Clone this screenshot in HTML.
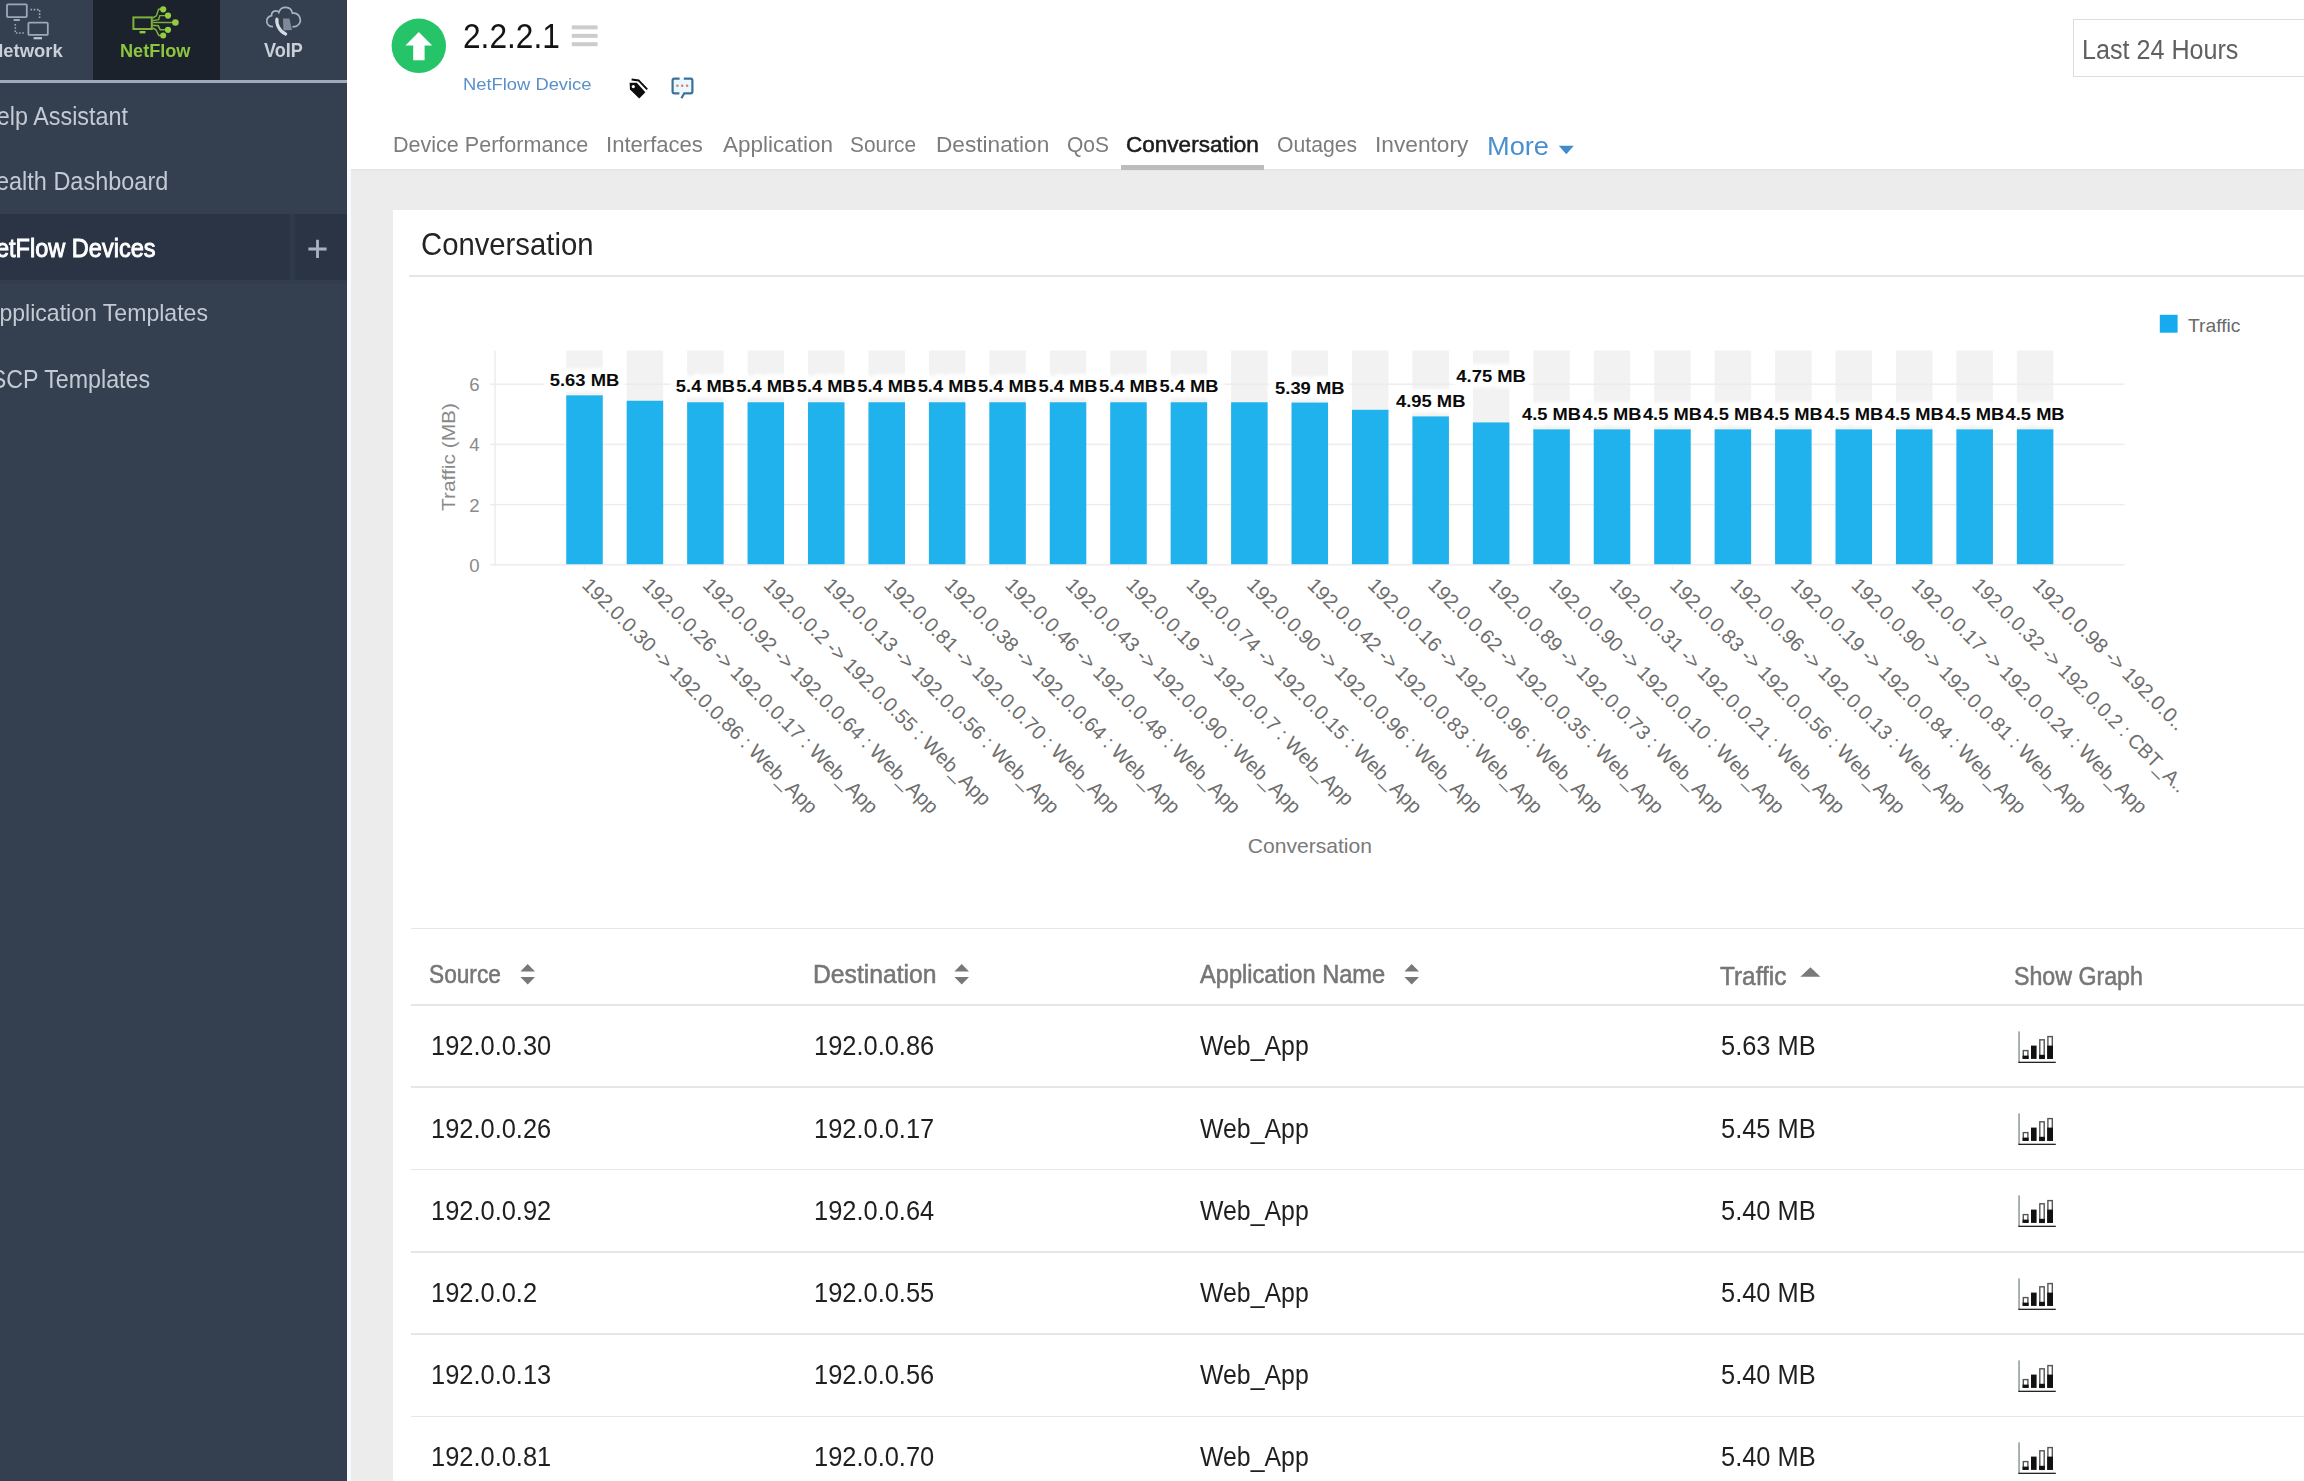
<!DOCTYPE html>
<html>
<head>
<meta charset="utf-8">
<title>NetFlow Device - Conversation</title>
<style>
html,body{margin:0;padding:0;}
body{width:2304px;height:1481px;overflow:hidden;position:relative;background:#ececec;font-family:"Liberation Sans",sans-serif;}
.abs{position:absolute;}
.t{position:absolute;white-space:nowrap;line-height:1;transform-origin:0 0;font-family:"Liberation Sans",sans-serif;}
.hl{position:absolute;height:1.6px;right:0;background:#e6e6e6;}
.chart{position:absolute;left:0;top:0;}
.dl{font-size:16.6px;font-weight:700;fill:#0a0a0a;}
.dg{font-size:16.6px;font-weight:700;fill:#fff;stroke:#fff;stroke-width:12px;stroke-linejoin:round;}
#side{position:absolute;left:0;top:0;width:347px;height:1481px;background:#343f50;}
#head{position:absolute;left:347px;top:0;right:0;height:169.4px;background:#fff;box-shadow:0 1px 2px rgba(0,0,0,.05);}
#strip{position:absolute;left:347px;top:169px;width:3.9px;bottom:0;background:#f8fbff;}
#panel{position:absolute;left:393px;top:210.2px;right:0;bottom:0;background:#fff;}
#nftab{position:absolute;left:92.5px;top:0;width:127.5px;height:80px;background:#1b222c;}
#sline{position:absolute;left:0;top:80.4px;width:347px;height:2.6px;background:#9fabbc;}
#act{position:absolute;left:0;top:213.5px;width:347px;height:66.5px;background:#2a3445;}
#actsep{position:absolute;left:290px;top:213.5px;width:4.5px;height:66.5px;background:#2e394a;}
#actb{position:absolute;left:0;top:280px;width:347px;height:4px;background:#313c4d;}
#tabul{position:absolute;left:1121.2px;top:164.8px;width:142.6px;height:5.6px;background:#bcbcbc;}
#range{position:absolute;left:2073.3px;top:18.9px;width:300px;height:55.9px;border:1.8px solid #dddddd;background:#fff;}
</style>
</head>
<body>
<div id="side"></div>
<div id="head"></div>
<div id="strip"></div>
<div id="panel"></div>
<div id="nftab"></div>
<div id="sline"></div>
<div id="act"></div><div id="actsep"></div><div id="actb"></div>
<div id="tabul"></div>
<div id="range"></div>

<!-- sidebar: plus -->
<svg class="abs" style="left:307px;top:238px" width="22" height="22" viewBox="0 0 22 22"><path d="M1.4 11 H19.6 M10.5 1.8 V20" stroke="#a9b3c0" stroke-width="2.8" fill="none"/></svg>

<!-- top nav icon: Network -->
<svg class="abs" style="left:0;top:0" width="92" height="42" viewBox="0 0 92 42" fill="none" stroke="#9ca8b8">
  <rect x="7" y="4.3" width="19.8" height="12.8" rx="1" stroke-width="1.8"/>
  <path d="M13.6 20 H19.8" stroke-width="2"/>
  <rect x="28.4" y="22.7" width="19.4" height="12.2" rx="1" stroke-width="1.8"/>
  <path d="M33.6 38.2 H42" stroke-width="2.2" stroke="#b9c4cf"/>
  <path d="M30.5 9.6 H39.6 V18.4" stroke-width="1.6" stroke-dasharray="1.6 1.6"/>
  <path d="M15.3 24 V33 H24" stroke-width="1.6" stroke-dasharray="1.6 1.6"/>
</svg>

<!-- top nav icon: NetFlow -->
<svg class="abs" style="left:120px;top:0" width="70" height="42" viewBox="120 0 70 42" fill="none" stroke="#7db13a" stroke-width="1.45">
  <rect x="133.4" y="17.4" width="18.4" height="11.6" stroke-width="2"/>
  <path d="M139.6 32.2 H145.4" stroke-width="2.4" stroke="#8fc93f"/>
  <path d="M152.5 18 L156.4 15.8 L158.6 9.3 H162"/>
  <path d="M152.5 20.6 L158.6 19.6 L159.8 15.6 H166"/>
  <path d="M152.5 22.5 H174"/>
  <path d="M152.5 25.2 L158.2 25.8 L160.2 29.7 H166"/>
  <path d="M152.5 28 L155.8 29.6 L158.8 35.4 H162"/>
  <g fill="#94cc3f" stroke="none">
    <circle cx="163.2" cy="9.3" r="3.1"/><circle cx="168" cy="15.6" r="3.1"/><circle cx="175.4" cy="22.5" r="3.3"/>
    <circle cx="168" cy="29.8" r="3.1"/><circle cx="163.2" cy="35.6" r="3.0"/>
  </g>
</svg>

<!-- top nav icon: VoIP -->
<svg class="abs" style="left:260px;top:0" width="50" height="42" viewBox="260 0 50 42" fill="none">
  <path d="M273 26.6 C265.6 26.6 264.4 17.6 271.6 15.6 C271.2 10.6 277.2 9.6 278.8 12.4 C281 5.6 291 5.6 292.4 13.2 C300.6 12.6 303.4 23 296 26.4 L292.5 26.8" stroke="#a7b2c2" stroke-width="1.7"/>
  <path d="M277 19.2 C276 24 279.6 31.6 285.6 34" stroke="#d5dbe4" stroke-width="3.2" stroke-linecap="round"/>
  <path d="M283 18.4 L289.4 18.4 L292 30 L283.4 30.6 Z" fill="#9aa3b1" opacity=".75"/>
</svg>

<!-- status circle -->
<svg class="abs" style="left:390px;top:17px" width="58" height="58" viewBox="0 0 58 58">
  <circle cx="28.8" cy="28.8" r="27.2" fill="#26c468"/>
  <path d="M28.8 15 L42.2 28.5 L34.6 28.5 L34.6 43.2 L23.2 43.2 L23.2 28.5 L15.4 28.5 Z" fill="#fff"/>
</svg>

<!-- hamburger -->
<svg class="abs" style="left:571px;top:24px" width="28" height="24" viewBox="0 0 28 24">
  <rect x="0.8" y="1.35" width="25.8" height="4" fill="#cccccc"/><rect x="0.8" y="9.85" width="25.8" height="4" fill="#cccccc"/><rect x="0.8" y="18.2" width="25.8" height="4" fill="#cccccc"/>
</svg>

<!-- tag icon -->
<svg class="abs" style="left:626px;top:76px" width="26" height="26" viewBox="626 76 26 26">
  <path d="M629.6 82.8 L636.8 82.8 L645.4 92.2 L639.2 98.6 L630 89.4 Z" fill="#0c0c0c"/>
  <circle cx="633.3" cy="86.6" r="1.6" fill="#fff"/>
  <path d="M631.6 79.6 L638.6 80.4 L647.2 89.4" stroke="#0c0c0c" stroke-width="2" fill="none"/>
</svg>

<!-- comment icon -->
<svg class="abs" style="left:668px;top:74px" width="30" height="28" viewBox="668 74 30 28" fill="none">
  <rect x="672.6" y="78.6" width="19.8" height="14" fill="#e9f8fc"/>
  <path d="M679.6 78.6 H674.4 Q672.6 78.6 672.6 80.4 V91.6 Q672.6 93.4 674.4 93.4 H679.4 M683.8 78.6 H690.6 Q692.4 78.6 692.4 80.4 V91.6 Q692.4 93.4 690.6 93.4 H684.2 L681.4 98.2" stroke="#3d7199" stroke-width="2.2"/>
  <circle cx="677.4" cy="85.8" r="1.25" fill="#e2777a"/><circle cx="682.2" cy="85.8" r="1.25" fill="#e2777a"/><circle cx="687.1" cy="85.8" r="1.25" fill="#e2777a"/>
</svg>

<!-- More caret -->
<svg class="abs" style="left:1558px;top:145px" width="17" height="10" viewBox="0 0 17 10"><path d="M0.8 0.8 L15.8 0.8 L8.3 9.2 Z" fill="#428bca"/></svg>

<div class="hl" style="top:275.2px;left:409px"></div>
<div class="hl" style="top:927.7px;left:410.5px"></div>
<div class="hl" style="top:1004.10px;left:410.5px"></div>
<div class="hl" style="top:1086.40px;left:410.5px"></div>
<div class="hl" style="top:1168.70px;left:410.5px"></div>
<div class="hl" style="top:1251.00px;left:410.5px"></div>
<div class="hl" style="top:1333.30px;left:410.5px"></div>
<div class="hl" style="top:1415.60px;left:410.5px"></div>
<svg class="chart" width="2304" height="1481" viewBox="0 0 2304 1481" font-family="Liberation Sans, sans-serif">
<rect x="566.25" y="350.5" width="36.5" height="214.30" fill="#f2f2f2"/>
<rect x="626.69" y="350.5" width="36.5" height="214.30" fill="#f2f2f2"/>
<rect x="687.13" y="350.5" width="36.5" height="214.30" fill="#f2f2f2"/>
<rect x="747.58" y="350.5" width="36.5" height="214.30" fill="#f2f2f2"/>
<rect x="808.02" y="350.5" width="36.5" height="214.30" fill="#f2f2f2"/>
<rect x="868.46" y="350.5" width="36.5" height="214.30" fill="#f2f2f2"/>
<rect x="928.90" y="350.5" width="36.5" height="214.30" fill="#f2f2f2"/>
<rect x="989.34" y="350.5" width="36.5" height="214.30" fill="#f2f2f2"/>
<rect x="1049.78" y="350.5" width="36.5" height="214.30" fill="#f2f2f2"/>
<rect x="1110.22" y="350.5" width="36.5" height="214.30" fill="#f2f2f2"/>
<rect x="1170.67" y="350.5" width="36.5" height="214.30" fill="#f2f2f2"/>
<rect x="1231.11" y="350.5" width="36.5" height="214.30" fill="#f2f2f2"/>
<rect x="1291.55" y="350.5" width="36.5" height="214.30" fill="#f2f2f2"/>
<rect x="1351.99" y="350.5" width="36.5" height="214.30" fill="#f2f2f2"/>
<rect x="1412.43" y="350.5" width="36.5" height="214.30" fill="#f2f2f2"/>
<rect x="1472.88" y="350.5" width="36.5" height="214.30" fill="#f2f2f2"/>
<rect x="1533.32" y="350.5" width="36.5" height="214.30" fill="#f2f2f2"/>
<rect x="1593.76" y="350.5" width="36.5" height="214.30" fill="#f2f2f2"/>
<rect x="1654.20" y="350.5" width="36.5" height="214.30" fill="#f2f2f2"/>
<rect x="1714.64" y="350.5" width="36.5" height="214.30" fill="#f2f2f2"/>
<rect x="1775.08" y="350.5" width="36.5" height="214.30" fill="#f2f2f2"/>
<rect x="1835.52" y="350.5" width="36.5" height="214.30" fill="#f2f2f2"/>
<rect x="1895.97" y="350.5" width="36.5" height="214.30" fill="#f2f2f2"/>
<rect x="1956.41" y="350.5" width="36.5" height="214.30" fill="#f2f2f2"/>
<rect x="2016.85" y="350.5" width="36.5" height="214.30" fill="#f2f2f2"/>
<rect x="490" y="564.10" width="1634.5" height="1.4" fill="#ececec"/>
<rect x="490" y="503.90" width="1634.5" height="1.4" fill="#ececec"/>
<rect x="490" y="443.70" width="1634.5" height="1.4" fill="#ececec"/>
<rect x="490" y="383.50" width="1634.5" height="1.4" fill="#ececec"/>
<rect x="494.4" y="350.5" width="1.3" height="215.00" fill="#eaeaea"/>
<rect x="566.25" y="395.34" width="36.5" height="168.86" fill="#20b2ec"/>
<rect x="584.00" y="565.60" width="1" height="4.5" fill="#f4f4f4"/>
<rect x="626.69" y="400.75" width="36.5" height="163.45" fill="#20b2ec"/>
<rect x="644.44" y="565.60" width="1" height="4.5" fill="#f4f4f4"/>
<rect x="687.13" y="402.26" width="36.5" height="161.94" fill="#20b2ec"/>
<rect x="704.88" y="565.60" width="1" height="4.5" fill="#f4f4f4"/>
<rect x="747.58" y="402.26" width="36.5" height="161.94" fill="#20b2ec"/>
<rect x="765.33" y="565.60" width="1" height="4.5" fill="#f4f4f4"/>
<rect x="808.02" y="402.26" width="36.5" height="161.94" fill="#20b2ec"/>
<rect x="825.77" y="565.60" width="1" height="4.5" fill="#f4f4f4"/>
<rect x="868.46" y="402.26" width="36.5" height="161.94" fill="#20b2ec"/>
<rect x="886.21" y="565.60" width="1" height="4.5" fill="#f4f4f4"/>
<rect x="928.90" y="402.26" width="36.5" height="161.94" fill="#20b2ec"/>
<rect x="946.65" y="565.60" width="1" height="4.5" fill="#f4f4f4"/>
<rect x="989.34" y="402.26" width="36.5" height="161.94" fill="#20b2ec"/>
<rect x="1007.09" y="565.60" width="1" height="4.5" fill="#f4f4f4"/>
<rect x="1049.78" y="402.26" width="36.5" height="161.94" fill="#20b2ec"/>
<rect x="1067.53" y="565.60" width="1" height="4.5" fill="#f4f4f4"/>
<rect x="1110.22" y="402.26" width="36.5" height="161.94" fill="#20b2ec"/>
<rect x="1127.97" y="565.60" width="1" height="4.5" fill="#f4f4f4"/>
<rect x="1170.67" y="402.26" width="36.5" height="161.94" fill="#20b2ec"/>
<rect x="1188.42" y="565.60" width="1" height="4.5" fill="#f4f4f4"/>
<rect x="1231.11" y="402.26" width="36.5" height="161.94" fill="#20b2ec"/>
<rect x="1248.86" y="565.60" width="1" height="4.5" fill="#f4f4f4"/>
<rect x="1291.55" y="402.56" width="36.5" height="161.64" fill="#20b2ec"/>
<rect x="1309.30" y="565.60" width="1" height="4.5" fill="#f4f4f4"/>
<rect x="1351.99" y="409.78" width="36.5" height="154.41" fill="#20b2ec"/>
<rect x="1369.74" y="565.60" width="1" height="4.5" fill="#f4f4f4"/>
<rect x="1412.43" y="416.41" width="36.5" height="147.79" fill="#20b2ec"/>
<rect x="1430.18" y="565.60" width="1" height="4.5" fill="#f4f4f4"/>
<rect x="1472.88" y="422.43" width="36.5" height="141.77" fill="#20b2ec"/>
<rect x="1490.62" y="565.60" width="1" height="4.5" fill="#f4f4f4"/>
<rect x="1533.32" y="429.35" width="36.5" height="134.85" fill="#20b2ec"/>
<rect x="1551.07" y="565.60" width="1" height="4.5" fill="#f4f4f4"/>
<rect x="1593.76" y="429.35" width="36.5" height="134.85" fill="#20b2ec"/>
<rect x="1611.51" y="565.60" width="1" height="4.5" fill="#f4f4f4"/>
<rect x="1654.20" y="429.35" width="36.5" height="134.85" fill="#20b2ec"/>
<rect x="1671.95" y="565.60" width="1" height="4.5" fill="#f4f4f4"/>
<rect x="1714.64" y="429.35" width="36.5" height="134.85" fill="#20b2ec"/>
<rect x="1732.39" y="565.60" width="1" height="4.5" fill="#f4f4f4"/>
<rect x="1775.08" y="429.35" width="36.5" height="134.85" fill="#20b2ec"/>
<rect x="1792.83" y="565.60" width="1" height="4.5" fill="#f4f4f4"/>
<rect x="1835.52" y="429.35" width="36.5" height="134.85" fill="#20b2ec"/>
<rect x="1853.27" y="565.60" width="1" height="4.5" fill="#f4f4f4"/>
<rect x="1895.97" y="429.35" width="36.5" height="134.85" fill="#20b2ec"/>
<rect x="1913.72" y="565.60" width="1" height="4.5" fill="#f4f4f4"/>
<rect x="1956.41" y="429.35" width="36.5" height="134.85" fill="#20b2ec"/>
<rect x="1974.16" y="565.60" width="1" height="4.5" fill="#f4f4f4"/>
<rect x="2016.85" y="429.35" width="36.5" height="134.85" fill="#20b2ec"/>
<rect x="2034.60" y="565.60" width="1" height="4.5" fill="#f4f4f4"/>
<text x="479.5" y="571.80" font-size="18.6" fill="#8a8a8a" text-anchor="end">0</text>
<text x="479.5" y="511.60" font-size="18.6" fill="#8a8a8a" text-anchor="end">2</text>
<text x="479.5" y="451.40" font-size="18.6" fill="#8a8a8a" text-anchor="end">4</text>
<text x="479.5" y="391.20" font-size="18.6" fill="#8a8a8a" text-anchor="end">6</text>
<text transform="translate(454.7 457) rotate(-90)" font-size="19" fill="#8a8a8a" text-anchor="middle" textLength="108" lengthAdjust="spacingAndGlyphs">Traffic (MB)</text>
<defs><filter id="gb" x="-10%" y="-60%" width="120%" height="220%"><feGaussianBlur stdDeviation="1.6"/></filter></defs>
<g filter="url(#gb)"><text x="584.50" y="386.0" class="dg" text-anchor="middle" textLength="69.5" lengthAdjust="spacingAndGlyphs">5.63 MB</text><text x="1309.80" y="393.8" class="dg" text-anchor="middle" textLength="69.5" lengthAdjust="spacingAndGlyphs">5.39 MB</text><text x="1430.68" y="406.8" class="dg" text-anchor="middle" textLength="69.5" lengthAdjust="spacingAndGlyphs">4.95 MB</text><text x="1491.12" y="382.0" class="dg" text-anchor="middle" textLength="69.5" lengthAdjust="spacingAndGlyphs">4.75 MB</text><text x="705.38" y="392.2" class="dg" text-anchor="middle" textLength="59.0" lengthAdjust="spacingAndGlyphs">5.4 MB</text><text x="765.83" y="392.2" class="dg" text-anchor="middle" textLength="59.0" lengthAdjust="spacingAndGlyphs">5.4 MB</text><text x="826.27" y="392.2" class="dg" text-anchor="middle" textLength="59.0" lengthAdjust="spacingAndGlyphs">5.4 MB</text><text x="886.71" y="392.2" class="dg" text-anchor="middle" textLength="59.0" lengthAdjust="spacingAndGlyphs">5.4 MB</text><text x="947.15" y="392.2" class="dg" text-anchor="middle" textLength="59.0" lengthAdjust="spacingAndGlyphs">5.4 MB</text><text x="1007.59" y="392.2" class="dg" text-anchor="middle" textLength="59.0" lengthAdjust="spacingAndGlyphs">5.4 MB</text><text x="1068.03" y="392.2" class="dg" text-anchor="middle" textLength="59.0" lengthAdjust="spacingAndGlyphs">5.4 MB</text><text x="1128.47" y="392.2" class="dg" text-anchor="middle" textLength="59.0" lengthAdjust="spacingAndGlyphs">5.4 MB</text><text x="1188.92" y="392.2" class="dg" text-anchor="middle" textLength="59.0" lengthAdjust="spacingAndGlyphs">5.4 MB</text><text x="1551.57" y="419.8" class="dg" text-anchor="middle" textLength="59.0" lengthAdjust="spacingAndGlyphs">4.5 MB</text><text x="1612.01" y="419.8" class="dg" text-anchor="middle" textLength="59.0" lengthAdjust="spacingAndGlyphs">4.5 MB</text><text x="1672.45" y="419.8" class="dg" text-anchor="middle" textLength="59.0" lengthAdjust="spacingAndGlyphs">4.5 MB</text><text x="1732.89" y="419.8" class="dg" text-anchor="middle" textLength="59.0" lengthAdjust="spacingAndGlyphs">4.5 MB</text><text x="1793.33" y="419.8" class="dg" text-anchor="middle" textLength="59.0" lengthAdjust="spacingAndGlyphs">4.5 MB</text><text x="1853.77" y="419.8" class="dg" text-anchor="middle" textLength="59.0" lengthAdjust="spacingAndGlyphs">4.5 MB</text><text x="1914.22" y="419.8" class="dg" text-anchor="middle" textLength="59.0" lengthAdjust="spacingAndGlyphs">4.5 MB</text><text x="1974.66" y="419.8" class="dg" text-anchor="middle" textLength="59.0" lengthAdjust="spacingAndGlyphs">4.5 MB</text><text x="2035.10" y="419.8" class="dg" text-anchor="middle" textLength="59.0" lengthAdjust="spacingAndGlyphs">4.5 MB</text></g>
<text x="584.50" y="386.0" class="dl" text-anchor="middle" textLength="69.5" lengthAdjust="spacingAndGlyphs">5.63 MB</text>
<text x="1309.80" y="393.8" class="dl" text-anchor="middle" textLength="69.5" lengthAdjust="spacingAndGlyphs">5.39 MB</text>
<text x="1430.68" y="406.8" class="dl" text-anchor="middle" textLength="69.5" lengthAdjust="spacingAndGlyphs">4.95 MB</text>
<text x="1491.12" y="382.0" class="dl" text-anchor="middle" textLength="69.5" lengthAdjust="spacingAndGlyphs">4.75 MB</text>
<text x="705.38" y="392.2" class="dl" text-anchor="middle" textLength="59.0" lengthAdjust="spacingAndGlyphs">5.4 MB</text>
<text x="765.83" y="392.2" class="dl" text-anchor="middle" textLength="59.0" lengthAdjust="spacingAndGlyphs">5.4 MB</text>
<text x="826.27" y="392.2" class="dl" text-anchor="middle" textLength="59.0" lengthAdjust="spacingAndGlyphs">5.4 MB</text>
<text x="886.71" y="392.2" class="dl" text-anchor="middle" textLength="59.0" lengthAdjust="spacingAndGlyphs">5.4 MB</text>
<text x="947.15" y="392.2" class="dl" text-anchor="middle" textLength="59.0" lengthAdjust="spacingAndGlyphs">5.4 MB</text>
<text x="1007.59" y="392.2" class="dl" text-anchor="middle" textLength="59.0" lengthAdjust="spacingAndGlyphs">5.4 MB</text>
<text x="1068.03" y="392.2" class="dl" text-anchor="middle" textLength="59.0" lengthAdjust="spacingAndGlyphs">5.4 MB</text>
<text x="1128.47" y="392.2" class="dl" text-anchor="middle" textLength="59.0" lengthAdjust="spacingAndGlyphs">5.4 MB</text>
<text x="1188.92" y="392.2" class="dl" text-anchor="middle" textLength="59.0" lengthAdjust="spacingAndGlyphs">5.4 MB</text>
<text x="1551.57" y="419.8" class="dl" text-anchor="middle" textLength="59.0" lengthAdjust="spacingAndGlyphs">4.5 MB</text>
<text x="1612.01" y="419.8" class="dl" text-anchor="middle" textLength="59.0" lengthAdjust="spacingAndGlyphs">4.5 MB</text>
<text x="1672.45" y="419.8" class="dl" text-anchor="middle" textLength="59.0" lengthAdjust="spacingAndGlyphs">4.5 MB</text>
<text x="1732.89" y="419.8" class="dl" text-anchor="middle" textLength="59.0" lengthAdjust="spacingAndGlyphs">4.5 MB</text>
<text x="1793.33" y="419.8" class="dl" text-anchor="middle" textLength="59.0" lengthAdjust="spacingAndGlyphs">4.5 MB</text>
<text x="1853.77" y="419.8" class="dl" text-anchor="middle" textLength="59.0" lengthAdjust="spacingAndGlyphs">4.5 MB</text>
<text x="1914.22" y="419.8" class="dl" text-anchor="middle" textLength="59.0" lengthAdjust="spacingAndGlyphs">4.5 MB</text>
<text x="1974.66" y="419.8" class="dl" text-anchor="middle" textLength="59.0" lengthAdjust="spacingAndGlyphs">4.5 MB</text>
<text x="2035.10" y="419.8" class="dl" text-anchor="middle" textLength="59.0" lengthAdjust="spacingAndGlyphs">4.5 MB</text>
<text transform="translate(580.90 586.3) rotate(45)" font-size="20.05" fill="#6e6e6e">192.0.0.30 -&gt; 192.0.0.86 : Web_App</text>
<text transform="translate(641.34 586.3) rotate(45)" font-size="20.05" fill="#6e6e6e">192.0.0.26 -&gt; 192.0.0.17 : Web_App</text>
<text transform="translate(701.78 586.3) rotate(45)" font-size="20.05" fill="#6e6e6e">192.0.0.92 -&gt; 192.0.0.64 : Web_App</text>
<text transform="translate(762.23 586.3) rotate(45)" font-size="20.05" fill="#6e6e6e">192.0.0.2 -&gt; 192.0.0.55 : Web_App</text>
<text transform="translate(822.67 586.3) rotate(45)" font-size="20.05" fill="#6e6e6e">192.0.0.13 -&gt; 192.0.0.56 : Web_App</text>
<text transform="translate(883.11 586.3) rotate(45)" font-size="20.05" fill="#6e6e6e">192.0.0.81 -&gt; 192.0.0.70 : Web_App</text>
<text transform="translate(943.55 586.3) rotate(45)" font-size="20.05" fill="#6e6e6e">192.0.0.38 -&gt; 192.0.0.64 : Web_App</text>
<text transform="translate(1003.99 586.3) rotate(45)" font-size="20.05" fill="#6e6e6e">192.0.0.46 -&gt; 192.0.0.48 : Web_App</text>
<text transform="translate(1064.43 586.3) rotate(45)" font-size="20.05" fill="#6e6e6e">192.0.0.43 -&gt; 192.0.0.90 : Web_App</text>
<text transform="translate(1124.88 586.3) rotate(45)" font-size="20.05" fill="#6e6e6e">192.0.0.19 -&gt; 192.0.0.7 : Web_App</text>
<text transform="translate(1185.32 586.3) rotate(45)" font-size="20.05" fill="#6e6e6e">192.0.0.74 -&gt; 192.0.0.15 : Web_App</text>
<text transform="translate(1245.76 586.3) rotate(45)" font-size="20.05" fill="#6e6e6e">192.0.0.90 -&gt; 192.0.0.96 : Web_App</text>
<text transform="translate(1306.20 586.3) rotate(45)" font-size="20.05" fill="#6e6e6e">192.0.0.42 -&gt; 192.0.0.83 : Web_App</text>
<text transform="translate(1366.64 586.3) rotate(45)" font-size="20.05" fill="#6e6e6e">192.0.0.16 -&gt; 192.0.0.96 : Web_App</text>
<text transform="translate(1427.08 586.3) rotate(45)" font-size="20.05" fill="#6e6e6e">192.0.0.62 -&gt; 192.0.0.35 : Web_App</text>
<text transform="translate(1487.53 586.3) rotate(45)" font-size="20.05" fill="#6e6e6e">192.0.0.89 -&gt; 192.0.0.73 : Web_App</text>
<text transform="translate(1547.97 586.3) rotate(45)" font-size="20.05" fill="#6e6e6e">192.0.0.90 -&gt; 192.0.0.10 : Web_App</text>
<text transform="translate(1608.41 586.3) rotate(45)" font-size="20.05" fill="#6e6e6e">192.0.0.31 -&gt; 192.0.0.21 : Web_App</text>
<text transform="translate(1668.85 586.3) rotate(45)" font-size="20.05" fill="#6e6e6e">192.0.0.83 -&gt; 192.0.0.56 : Web_App</text>
<text transform="translate(1729.29 586.3) rotate(45)" font-size="20.05" fill="#6e6e6e">192.0.0.96 -&gt; 192.0.0.13 : Web_App</text>
<text transform="translate(1789.73 586.3) rotate(45)" font-size="20.05" fill="#6e6e6e">192.0.0.19 -&gt; 192.0.0.84 : Web_App</text>
<text transform="translate(1850.17 586.3) rotate(45)" font-size="20.05" fill="#6e6e6e">192.0.0.90 -&gt; 192.0.0.81 : Web_App</text>
<text transform="translate(1910.62 586.3) rotate(45)" font-size="20.05" fill="#6e6e6e">192.0.0.17 -&gt; 192.0.0.24 : Web_App</text>
<text transform="translate(1971.06 586.3) rotate(45)" font-size="20.05" fill="#6e6e6e" textLength="293.5" lengthAdjust="spacingAndGlyphs">192.0.0.32 -&gt; 192.0.0.2 : CBT_A..</text>
<text transform="translate(2031.50 586.3) rotate(45)" font-size="20.4" fill="#6e6e6e">192.0.0.98 -&gt; 192.0.0..</text>
<text x="1309.9" y="852.8" font-size="21" fill="#7a7a7a" text-anchor="middle" textLength="124.2" lengthAdjust="spacingAndGlyphs">Conversation</text>
<rect x="2159.8" y="314.8" width="17.8" height="17.9" fill="#18aaee"/>
<text x="2188" y="331.6" font-size="19" fill="#6a6a6a" textLength="52.5" lengthAdjust="spacingAndGlyphs">Traffic</text>
</svg>
<svg class="abs" style="left:519.9px;top:963.8px" width="16" height="22" viewBox="0 0 16 22"><path d="M0.4 7.6 L7.7 0 L15 7.6 Z M0.4 13 L15 13 L7.7 20.4 Z" fill="#787878"/></svg>
<svg class="abs" style="left:953.9px;top:963.8px" width="16" height="22" viewBox="0 0 16 22"><path d="M0.4 7.6 L7.7 0 L15 7.6 Z M0.4 13 L15 13 L7.7 20.4 Z" fill="#787878"/></svg>
<svg class="abs" style="left:1403.5px;top:963.8px" width="16" height="22" viewBox="0 0 16 22"><path d="M0.4 7.6 L7.7 0 L15 7.6 Z M0.4 13 L15 13 L7.7 20.4 Z" fill="#787878"/></svg>
<svg class="abs" style="left:1800px;top:967.2px" width="21" height="11" viewBox="0 0 21 11"><path d="M0.4 9.8 L10.4 0.2 L20.4 9.8 Z" fill="#7a7a7a"/></svg>
<svg class="abs" style="left:2017px;top:1030.90px" width="40" height="33" viewBox="0 0 40 33"><rect x="1.4" y="0.4" width="1.3" height="31.4" fill="#7d8a86"/><rect x="1.4" y="30.7" width="37.4" height="1.25" fill="#1a1a1a"/><rect x="6.3" y="19.6" width="4.6" height="7.6" fill="#fff" stroke="#555" stroke-width="1.4"/><rect x="5.6" y="24.6" width="6" height="3.3" fill="#111"/><rect x="14" y="14.6" width="5.6" height="13.3" fill="#111"/><rect x="22.8" y="8.8" width="4.4" height="18.6" fill="#fff" stroke="#555" stroke-width="1.4"/><rect x="22.1" y="23.8" width="5.8" height="4.1" fill="#111"/><rect x="30.9" y="5.6" width="4.4" height="21.6" fill="#fff" stroke="#555" stroke-width="1.4"/><rect x="30.2" y="14.6" width="5.8" height="13.3" fill="#111"/></svg>
<svg class="abs" style="left:2017px;top:1113.10px" width="40" height="33" viewBox="0 0 40 33"><rect x="1.4" y="0.4" width="1.3" height="31.4" fill="#7d8a86"/><rect x="1.4" y="30.7" width="37.4" height="1.25" fill="#1a1a1a"/><rect x="6.3" y="19.6" width="4.6" height="7.6" fill="#fff" stroke="#555" stroke-width="1.4"/><rect x="5.6" y="24.6" width="6" height="3.3" fill="#111"/><rect x="14" y="14.6" width="5.6" height="13.3" fill="#111"/><rect x="22.8" y="8.8" width="4.4" height="18.6" fill="#fff" stroke="#555" stroke-width="1.4"/><rect x="22.1" y="23.8" width="5.8" height="4.1" fill="#111"/><rect x="30.9" y="5.6" width="4.4" height="21.6" fill="#fff" stroke="#555" stroke-width="1.4"/><rect x="30.2" y="14.6" width="5.8" height="13.3" fill="#111"/></svg>
<svg class="abs" style="left:2017px;top:1195.30px" width="40" height="33" viewBox="0 0 40 33"><rect x="1.4" y="0.4" width="1.3" height="31.4" fill="#7d8a86"/><rect x="1.4" y="30.7" width="37.4" height="1.25" fill="#1a1a1a"/><rect x="6.3" y="19.6" width="4.6" height="7.6" fill="#fff" stroke="#555" stroke-width="1.4"/><rect x="5.6" y="24.6" width="6" height="3.3" fill="#111"/><rect x="14" y="14.6" width="5.6" height="13.3" fill="#111"/><rect x="22.8" y="8.8" width="4.4" height="18.6" fill="#fff" stroke="#555" stroke-width="1.4"/><rect x="22.1" y="23.8" width="5.8" height="4.1" fill="#111"/><rect x="30.9" y="5.6" width="4.4" height="21.6" fill="#fff" stroke="#555" stroke-width="1.4"/><rect x="30.2" y="14.6" width="5.8" height="13.3" fill="#111"/></svg>
<svg class="abs" style="left:2017px;top:1277.50px" width="40" height="33" viewBox="0 0 40 33"><rect x="1.4" y="0.4" width="1.3" height="31.4" fill="#7d8a86"/><rect x="1.4" y="30.7" width="37.4" height="1.25" fill="#1a1a1a"/><rect x="6.3" y="19.6" width="4.6" height="7.6" fill="#fff" stroke="#555" stroke-width="1.4"/><rect x="5.6" y="24.6" width="6" height="3.3" fill="#111"/><rect x="14" y="14.6" width="5.6" height="13.3" fill="#111"/><rect x="22.8" y="8.8" width="4.4" height="18.6" fill="#fff" stroke="#555" stroke-width="1.4"/><rect x="22.1" y="23.8" width="5.8" height="4.1" fill="#111"/><rect x="30.9" y="5.6" width="4.4" height="21.6" fill="#fff" stroke="#555" stroke-width="1.4"/><rect x="30.2" y="14.6" width="5.8" height="13.3" fill="#111"/></svg>
<svg class="abs" style="left:2017px;top:1359.70px" width="40" height="33" viewBox="0 0 40 33"><rect x="1.4" y="0.4" width="1.3" height="31.4" fill="#7d8a86"/><rect x="1.4" y="30.7" width="37.4" height="1.25" fill="#1a1a1a"/><rect x="6.3" y="19.6" width="4.6" height="7.6" fill="#fff" stroke="#555" stroke-width="1.4"/><rect x="5.6" y="24.6" width="6" height="3.3" fill="#111"/><rect x="14" y="14.6" width="5.6" height="13.3" fill="#111"/><rect x="22.8" y="8.8" width="4.4" height="18.6" fill="#fff" stroke="#555" stroke-width="1.4"/><rect x="22.1" y="23.8" width="5.8" height="4.1" fill="#111"/><rect x="30.9" y="5.6" width="4.4" height="21.6" fill="#fff" stroke="#555" stroke-width="1.4"/><rect x="30.2" y="14.6" width="5.8" height="13.3" fill="#111"/></svg>
<svg class="abs" style="left:2017px;top:1441.90px" width="40" height="33" viewBox="0 0 40 33"><rect x="1.4" y="0.4" width="1.3" height="31.4" fill="#7d8a86"/><rect x="1.4" y="30.7" width="37.4" height="1.25" fill="#1a1a1a"/><rect x="6.3" y="19.6" width="4.6" height="7.6" fill="#fff" stroke="#555" stroke-width="1.4"/><rect x="5.6" y="24.6" width="6" height="3.3" fill="#111"/><rect x="14" y="14.6" width="5.6" height="13.3" fill="#111"/><rect x="22.8" y="8.8" width="4.4" height="18.6" fill="#fff" stroke="#555" stroke-width="1.4"/><rect x="22.1" y="23.8" width="5.8" height="4.1" fill="#111"/><rect x="30.9" y="5.6" width="4.4" height="21.6" fill="#fff" stroke="#555" stroke-width="1.4"/><rect x="30.2" y="14.6" width="5.8" height="13.3" fill="#111"/></svg>
<span class="t" style="left:463.08px;top:18.55px;font-size:34.3px;color:#141414;font-weight:400;transform:scaleX(0.9240)">2.2.2.1</span>
<span class="t" style="left:462.71px;top:77.27px;font-size:16.86px;color:#5a90c9;font-weight:400;transform:scaleX(1.0884)">NetFlow Device</span>
<span class="t" style="left:2081.99px;top:35.95px;font-size:27.76px;color:#606060;font-weight:400;transform:scaleX(0.9053)">Last 24 Hours</span>
<span class="t" style="left:393.02px;top:134.49px;font-size:21.95px;color:#7c7c7c;font-weight:400;transform:scaleX(0.9821)">Device Performance</span>
<span class="t" style="left:606.39px;top:133.55px;font-size:21.95px;color:#7c7c7c;font-weight:400;transform:scaleX(1.0056)">Interfaces</span>
<span class="t" style="left:723.00px;top:133.55px;font-size:21.95px;color:#7c7c7c;font-weight:400;transform:scaleX(1.0247)">Application</span>
<span class="t" style="left:850.30px;top:134.49px;font-size:21.95px;color:#7c7c7c;font-weight:400;transform:scaleX(0.9515)">Source</span>
<span class="t" style="left:935.97px;top:133.55px;font-size:21.95px;color:#7c7c7c;font-weight:400;transform:scaleX(1.0319)">Destination</span>
<span class="t" style="left:1066.54px;top:134.49px;font-size:21.95px;color:#7c7c7c;font-weight:400;transform:scaleX(0.9580)">QoS</span>
<span class="t" style="left:1276.53px;top:134.49px;font-size:21.95px;color:#7c7c7c;font-weight:400;transform:scaleX(0.9662)">Outages</span>
<span class="t" style="left:1374.93px;top:133.55px;font-size:21.95px;color:#7c7c7c;font-weight:400;transform:scaleX(1.0342)">Inventory</span>
<span class="t" style="left:1125.97px;top:133.55px;font-size:21.95px;color:#1c1c1c;font-weight:400;transform:scaleX(1.0270);-webkit-text-stroke:0.55px #1c1c1c">Conversation</span>
<span class="t" style="left:1487.36px;top:133.88px;font-size:25.44px;color:#4a8fd0;font-weight:400;transform:scaleX(1.0695)">More</span>
<span class="t" style="left:420.65px;top:229.63px;font-size:30.96px;color:#242424;font-weight:400;transform:scaleX(0.9457)">Conversation</span>
<span class="t" style="left:429.41px;top:961.86px;font-size:25.58px;color:#767676;font-weight:400;transform:scaleX(0.8870);-webkit-text-stroke:0.55px #767676">Source</span>
<span class="t" style="left:813.07px;top:961.86px;font-size:25.58px;color:#767676;font-weight:400;transform:scaleX(0.9652);-webkit-text-stroke:0.55px #767676">Destination</span>
<span class="t" style="left:1200.00px;top:961.80px;font-size:25.29px;color:#767676;font-weight:400;transform:scaleX(0.9346);-webkit-text-stroke:0.55px #767676">Application Name</span>
<span class="t" style="left:1720.20px;top:962.52px;font-size:26.45px;color:#767676;font-weight:400;transform:scaleX(0.9224);-webkit-text-stroke:0.55px #767676">Traffic</span>
<span class="t" style="left:2014.02px;top:962.52px;font-size:26.45px;color:#767676;font-weight:400;transform:scaleX(0.8769);-webkit-text-stroke:0.55px #767676">Show Graph</span>
<span class="t" style="left:431.18px;top:1031.78px;font-size:27.91px;color:#1f1f1f;font-weight:400;transform:scaleX(0.9112)">192.0.0.30</span>
<span class="t" style="left:814.48px;top:1031.78px;font-size:27.91px;color:#1f1f1f;font-weight:400;transform:scaleX(0.9112)">192.0.0.86</span>
<span class="t" style="left:1200.00px;top:1031.78px;font-size:27.91px;color:#1f1f1f;font-weight:400;transform:scaleX(0.8910)">Web_App</span>
<span class="t" style="left:1720.69px;top:1031.78px;font-size:27.91px;color:#1f1f1f;font-weight:400;transform:scaleX(0.9108)">5.63 MB</span>
<span class="t" style="left:431.18px;top:1114.58px;font-size:27.91px;color:#1f1f1f;font-weight:400;transform:scaleX(0.9112)">192.0.0.26</span>
<span class="t" style="left:814.48px;top:1114.58px;font-size:27.91px;color:#1f1f1f;font-weight:400;transform:scaleX(0.9112)">192.0.0.17</span>
<span class="t" style="left:1200.00px;top:1114.58px;font-size:27.91px;color:#1f1f1f;font-weight:400;transform:scaleX(0.8910)">Web_App</span>
<span class="t" style="left:1720.69px;top:1114.58px;font-size:27.91px;color:#1f1f1f;font-weight:400;transform:scaleX(0.9108)">5.45 MB</span>
<span class="t" style="left:431.18px;top:1196.98px;font-size:27.91px;color:#1f1f1f;font-weight:400;transform:scaleX(0.9112)">192.0.0.92</span>
<span class="t" style="left:814.48px;top:1196.98px;font-size:27.91px;color:#1f1f1f;font-weight:400;transform:scaleX(0.9112)">192.0.0.64</span>
<span class="t" style="left:1200.00px;top:1196.98px;font-size:27.91px;color:#1f1f1f;font-weight:400;transform:scaleX(0.8910)">Web_App</span>
<span class="t" style="left:1720.69px;top:1196.98px;font-size:27.91px;color:#1f1f1f;font-weight:400;transform:scaleX(0.9108)">5.40 MB</span>
<span class="t" style="left:431.18px;top:1279.38px;font-size:27.91px;color:#1f1f1f;font-weight:400;transform:scaleX(0.9112)">192.0.0.2</span>
<span class="t" style="left:814.48px;top:1279.38px;font-size:27.91px;color:#1f1f1f;font-weight:400;transform:scaleX(0.9112)">192.0.0.55</span>
<span class="t" style="left:1200.00px;top:1279.38px;font-size:27.91px;color:#1f1f1f;font-weight:400;transform:scaleX(0.8910)">Web_App</span>
<span class="t" style="left:1720.69px;top:1279.38px;font-size:27.91px;color:#1f1f1f;font-weight:400;transform:scaleX(0.9108)">5.40 MB</span>
<span class="t" style="left:431.18px;top:1360.58px;font-size:27.91px;color:#1f1f1f;font-weight:400;transform:scaleX(0.9112)">192.0.0.13</span>
<span class="t" style="left:814.48px;top:1360.58px;font-size:27.91px;color:#1f1f1f;font-weight:400;transform:scaleX(0.9112)">192.0.0.56</span>
<span class="t" style="left:1200.00px;top:1360.58px;font-size:27.91px;color:#1f1f1f;font-weight:400;transform:scaleX(0.8910)">Web_App</span>
<span class="t" style="left:1720.69px;top:1360.58px;font-size:27.91px;color:#1f1f1f;font-weight:400;transform:scaleX(0.9108)">5.40 MB</span>
<span class="t" style="left:431.18px;top:1442.78px;font-size:27.91px;color:#1f1f1f;font-weight:400;transform:scaleX(0.9112)">192.0.0.81</span>
<span class="t" style="left:814.48px;top:1442.78px;font-size:27.91px;color:#1f1f1f;font-weight:400;transform:scaleX(0.9112)">192.0.0.70</span>
<span class="t" style="left:1200.00px;top:1442.78px;font-size:27.91px;color:#1f1f1f;font-weight:400;transform:scaleX(0.8910)">Web_App</span>
<span class="t" style="left:1720.69px;top:1442.78px;font-size:27.91px;color:#1f1f1f;font-weight:400;transform:scaleX(0.9108)">5.40 MB</span>
<span class="t" style="left:-20.24px;top:103.97px;font-size:25.15px;color:#c3cad4;font-weight:400;transform:scaleX(0.9291)">Help Assistant</span>
<span class="t" style="left:-20.97px;top:169.37px;font-size:25.15px;color:#c3cad4;font-weight:400;transform:scaleX(0.9340)">Health Dashboard</span>
<span class="t" style="left:-21.02px;top:235.57px;font-size:25.15px;color:#ffffff;font-weight:400;transform:scaleX(0.9361);-webkit-text-stroke:0.9px #ffffff">NetFlow Devices</span>
<span class="t" style="left:-15.83px;top:301.20px;font-size:24.71px;color:#c3cad4;font-weight:400;transform:scaleX(0.9337)">Application Templates</span>
<span class="t" style="left:-25.64px;top:368.13px;font-size:24.85px;color:#c3cad4;font-weight:400;transform:scaleX(0.9351)">DSCP Templates</span>
<span class="t" style="left:-9.52px;top:40.82px;font-size:19.04px;color:#c9d0da;font-weight:700;transform:scaleX(0.9696)">Network</span>
<span class="t" style="left:119.55px;top:40.82px;font-size:19.04px;color:#8cc63f;font-weight:700;transform:scaleX(0.9520)">NetFlow</span>
<span class="t" style="left:264.10px;top:40.74px;font-size:19.48px;color:#c9d0da;font-weight:700;transform:scaleX(0.9297)">VoIP</span>
</body>
</html>
